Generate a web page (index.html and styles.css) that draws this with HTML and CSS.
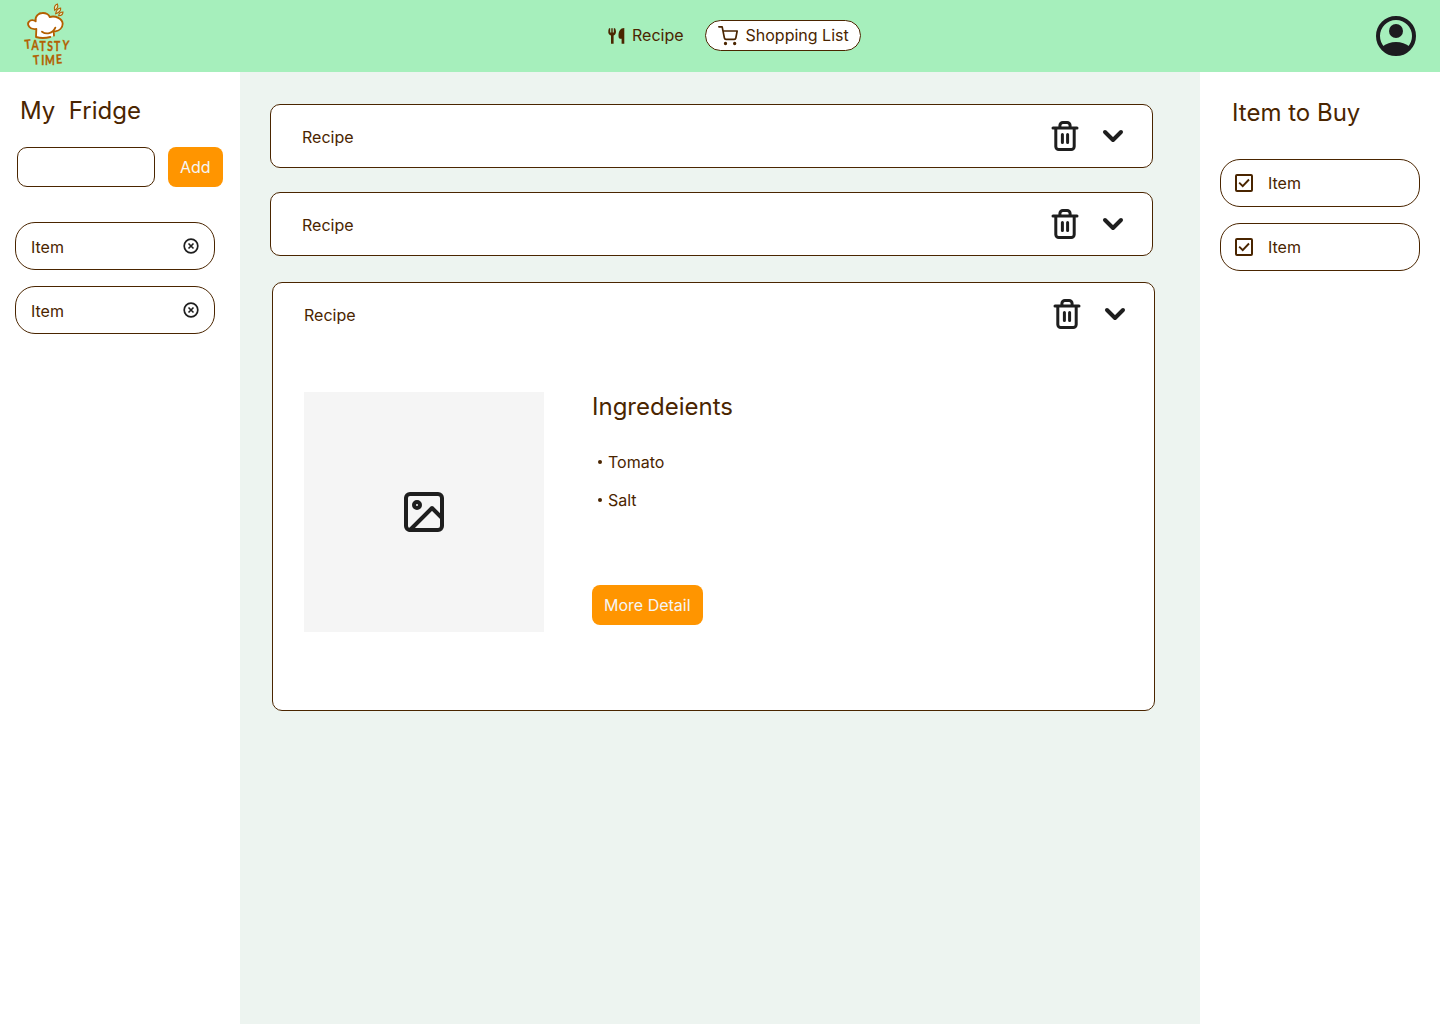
FILE: index.html
```html
<!DOCTYPE html>
<html lang="en">
<head>
<meta charset="utf-8">
<title>Tatsty Time</title>
<link rel="stylesheet" href="styles.css">
</head>
<body>
<svg class="sprite" aria-hidden="true">
  <symbol id="trash" viewBox="0 0 32 32"><path d="M4 8h24M6.8 8v18.5a3 3 0 0 0 3 3h12.4a3 3 0 0 0 3-3V8M10.9 8V5.5a3 3 0 0 1 3-3h4.2a3 3 0 0 1 3 3V8M13.4 14.5v8M18.6 14.5v8" fill="none" stroke="currentColor" stroke-width="3" stroke-linecap="round" stroke-linejoin="round"/></symbol>
  <symbol id="chevron" viewBox="0 0 24 24"><path d="M4 8l8 8 8-8" fill="none" stroke="currentColor" stroke-width="4" stroke-linecap="round" stroke-linejoin="round"/></symbol>
  <symbol id="remove" viewBox="0 0 16 16"><path d="M5.5 5.5l5 5M10.5 5.5l-5 5" stroke="currentColor" stroke-width="1.6"/><circle cx="8" cy="8" r="6.8" fill="none" stroke="currentColor" stroke-width="1.7"/></symbol>
  <symbol id="check" viewBox="0 0 18 18"><rect x="1" y="1" width="16" height="16" rx="1" fill="none" stroke="currentColor" stroke-width="2"/><path d="M4.200 8.600l3.500 3.500 6.300-6.600" fill="none" stroke="currentColor" stroke-width="1.900"/></symbol>
</svg>
<header class="topbar">
  <svg class="logo" viewBox="0 0 240 216" role="img" aria-label="Tatsty Time">
    <path class="hat" d="M79 87C58 91 50 72 57 65C62 58 72 60 77 64C74 48 87 39 97 39C108 38 117 44 119 51C137 46 157 56 158 71C158 84 147 92 136 94L130 108Q108 116 78 113Z"/>
    <path class="line" d="M79 87L78 111Q98 117 121 111M79 87C58 91 50 72 57 65C62 58 72 60 77 64C74 48 87 39 97 39C108 38 117 44 119 51C137 46 157 56 158 71C158 84 147 92 136 94M96 95C108 104 128 102 136 83M131 92L132 107"/>
    <path class="spark" d="M134 31C131 22 135 14 142 12C145 18 142 26 134 31ZM137 41C138 32 145 24 152 24C153 31 147 38 137 41ZM146 47C147 41 152 36 159 36C159 42 154 47 146 47Z"/>
    <g class="wordmark" transform="scale(.82 1)">
      <text x="55" y="147" rotate="-6">T</text><text x="79" y="151">A</text><text x="108" y="153">T</text><text x="136" y="154">S</text><text x="161" y="152">T</text><text x="190" y="147" rotate="6">Y</text>
      <text x="86" y="194" rotate="-5">T</text><text x="114" y="194">I</text><text x="128" y="194">M</text><text x="169" y="191" rotate="-4">E</text>
    </g>
  </svg>
  <nav class="nav">
    <a class="nav-link">
      <svg class="cutlery" viewBox="0 0 18 18" fill="currentColor"><path d="M1 1.2h1.2v4.3h1.1V1.2h1.4v4.3h1.1V1.2H7c.7 1.5 1.2 3 .9 4.4C7.7 7 7 8 5.6 8.4V16.8H3V8.400C1.200 8 .5 7 .3 5.600 .2 4 .4 2.500 1 1.200Z"/><path d="M16.300 1v15.800h-2.700v-5h-1.400C11.100 11.800 10.500 10.600 10.500 8.500 10.500 4.200 12.300 1 16.300 1Z"/></svg>
      <span>Recipe</span>
    </a>
    <a class="nav-link active">
      <svg class="cart" viewBox="0 0 24 24" fill="none" stroke="currentColor" stroke-width="2" stroke-linecap="round" stroke-linejoin="round"><path d="M1 1h4l2.680 13.390a2 2 0 0 0 2 1.610h9.720a2 2 0 0 0 2-1.610L23 6H6"/><circle cx="9" cy="21" r="1"/><circle cx="20" cy="21" r="1"/></svg>
      <span>Shopping List</span>
    </a>
  </nav>
  <svg class="avatar" viewBox="0 0 40 40"><circle cx="20" cy="20" r="18" fill="none" stroke="currentColor" stroke-width="4"/><circle cx="20" cy="15" r="7" fill="currentColor"/><path d="M6 31C10 27.500 15 26 20 26s10 1.500 14 5C30 36 25 38.500 20 38.500S10 36 6 31Z" fill="currentColor"/></svg>
</header>
<div class="layout">
  <aside class="fridge">
    <h2>My&nbsp; Fridge</h2>
    <form class="add-form">
      <input class="field" type="text" aria-label="Item">
      <button class="btn" type="button">Add</button>
    </form>
    <ul class="items">
      <li class="item"><span>Item</span><svg class="remove"><use href="#remove"/></svg></li>
      <li class="item"><span>Item</span><svg class="remove"><use href="#remove"/></svg></li>
    </ul>
  </aside>
  <main class="recipes">
    <section class="card"><div class="card-head"><span>Recipe</span><svg class="trash"><use href="#trash"/></svg><svg class="chevron"><use href="#chevron"/></svg></div></section>
    <section class="card"><div class="card-head"><span>Recipe</span><svg class="trash"><use href="#trash"/></svg><svg class="chevron"><use href="#chevron"/></svg></div></section>
    <section class="card open">
      <div class="card-head"><span>Recipe</span><svg class="trash"><use href="#trash"/></svg><svg class="chevron"><use href="#chevron"/></svg></div>
      <div class="card-body">
        <div class="photo"><svg class="picture" viewBox="0 0 24 24" fill="none" stroke="currentColor" stroke-width="2" stroke-linecap="round" stroke-linejoin="round"><rect x="3" y="3" width="18" height="18" rx="2"/><circle cx="8.500" cy="8.500" r="1.500"/><path d="M21 15l-5-5L5 21"/></svg></div>
        <div class="details">
          <h2>Ingredeients</h2>
          <ul class="ingredients"><li>Tomato</li><li>Salt</li></ul>
          <button class="btn" type="button">More Detail</button>
        </div>
      </div>
    </section>
  </main>
  <aside class="buy">
    <h2>Item to Buy</h2>
    <ul class="items">
      <li class="item"><svg class="check"><use href="#check"/></svg><span>Item</span></li>
      <li class="item"><svg class="check"><use href="#check"/></svg><span>Item</span></li>
    </ul>
  </aside>
</div>
</body>
</html>
```
FILE: styles.css
```css
* { box-sizing: border-box; }
body { margin: 0; font: 400 16px/24px Inter, sans-serif; color: #4a2500; background: #fff; }
h2 { margin: 0; font-size: 24px; line-height: 32px; font-weight: 400; white-space: nowrap; }
ul { margin: 0; padding: 0; list-style: none; }
svg { display: block; flex: none; }
.sprite { position: absolute; width: 0; height: 0; }

.topbar { height: 72px; background: #a6efbc; display: flex; align-items: center; padding: 0 24px 0 10px; }
.logo { width: 80px; height: 72px; }
.hat { fill: #fff; }
.line { fill: none; stroke: #b35f00; stroke-width: 5.5; stroke-linecap: round; stroke-linejoin: round; }
.spark { fill: #e6ecc0; stroke: #b35f00; stroke-width: 3.2; }
.wordmark { font: 700 38px Lato, sans-serif; fill: #b35f00; stroke: #b35f00; stroke-width: 1; }
.nav { display: flex; align-items: center; gap: 22px; margin: 0 0 1px 517px; }
.nav-link { display: flex; align-items: center; height: 31px; }
.nav-link span { padding-bottom: 1px; }
.cutlery { width: 18px; height: 18px; margin: 1px 6px 0 1px; }
.active { background: #fff; border: 1px solid #4a2500; border-radius: 16px; padding: 0 11px 0 12px; margin-left: -1px; }
.cart { width: 20px; height: 20px; margin-right: 8px; }
.avatar { width: 40px; height: 40px; margin-left: auto; color: #1d1b20; }

.layout { display: grid; grid-template-columns: 240px 960px 240px; height: 952px; }
.fridge { padding: 23px 15px 0; }
.fridge h2 { padding-left: 5px; }
.add-form { display: flex; gap: 13px; margin: 20px 0 35px 2px; }
.field { width: 138px; height: 40px; border: 1px solid #4a2500; border-radius: 10px; padding: 0 10px; font: inherit; background: #fff; }
.btn { height: 40px; border: 0; border-radius: 8px; padding: 0 12px; background: #ff9500; color: #f5f5f5; font: inherit; white-space: nowrap; }
.items { display: grid; gap: 16px; }
.item { width: 200px; height: 48px; border: 1px solid #4a2500; border-radius: 20px; display: flex; align-items: center; }
.fridge .item { justify-content: space-between; padding: 0 15px; }
.fridge .item span { padding-top: 2px; }
.remove { width: 16px; height: 16px; color: #1e1e1e; }

.recipes { background: #edf4f0; padding: 32px 30px; }
.card { width: 883px; background: #fff; border: 1px solid #4a2500; border-radius: 10px; margin-bottom: 24px; }
.card-head { height: 62px; display: flex; align-items: center; padding: 0 27px 0 31px; }
.card-head span { margin-right: auto; padding-top: 2px; }
.trash { width: 32px; height: 32px; margin-right: 20px; color: #1e1e1e; }
.chevron { width: 24px; height: 24px; color: #1e1e1e; }
.open { height: 429px; margin: 26px 0 0 2px; }
.card-body { display: flex; gap: 48px; padding: 47px 31px; }
.photo { width: 240px; height: 240px; background: #f5f5f5; display: grid; place-items: center; }
.picture { width: 48px; height: 48px; color: #1e1e1e; }
.details h2 { margin-top: -1px; }
.ingredients { display: grid; gap: 14px; margin: 27px 0 73px; }
.ingredients li { display: flex; align-items: center; }
.ingredients li::before { content: ""; width: 4px; height: 4px; border-radius: 50%; background: #4a2500; margin: 0 6px; }

.buy { padding: 25px 20px 0; }
.buy h2 { padding-left: 12px; margin-bottom: 30px; }
.buy .item { padding-left: 14px; gap: 15px; }
.check { width: 18px; height: 18px; }
```
